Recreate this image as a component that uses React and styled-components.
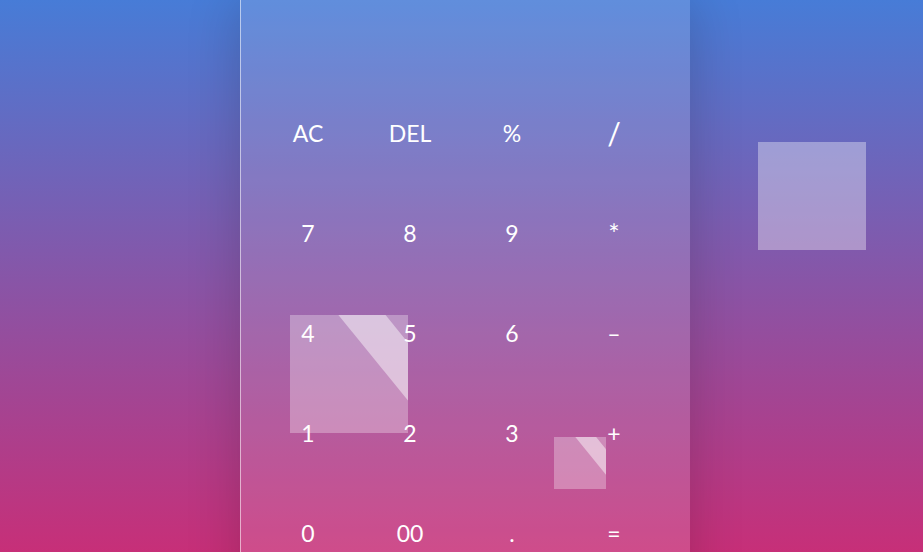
import React from "react";
import styled, { createGlobalStyle } from "styled-components";

const GlobalStyle = createGlobalStyle`
	html, body {
		margin: 0;
		padding: 0;
		height: 552px;
		overflow: hidden;
	}
	body {
		font-family: "Lato", "Open Sans", sans-serif;
	}
`;

const Page = styled.div`
	position: relative;
	height: 552px;
	overflow: hidden;
	padding-left: 240px;
	background: linear-gradient(to bottom, #477cd7, #c72f78);
`;

const Panel = styled.div`
	position: relative;
	width: 450px;
	height: 620px;
	box-sizing: border-box;
	padding-left: 16px;
	background: rgba(255, 255, 255, 0.14);
	border-left: 1px solid rgba(255, 255, 255, 0.55);
	box-shadow: 0 0 50px rgba(0, 0, 0, 0.18);
`;

const Display = styled.div`
	height: 83px;
`;

const Keys = styled.div`
	position: relative;
	z-index: 2;
	display: grid;
	grid-template-columns: repeat(4, 102px);
	grid-auto-rows: 100px;
`;

const Key = styled.button`
	display: flex;
	align-items: center;
	justify-content: center;
	background: transparent;
	border: none;
	padding: 0;
	color: #fff;
	font-family: "Lato", "Open Sans", sans-serif;
	font-size: ${(p) => p.$size || 23}px;
	font-weight: 400;
	cursor: pointer;
`;

const Square = styled.div`
	position: absolute;
	left: ${(p) => p.$x}px;
	top: ${(p) => p.$y}px;
	width: ${(p) => p.$size}px;
	height: ${(p) => p.$size}px;
	background: rgba(255, 255, 255, ${(p) => p.$alpha});
	z-index: 1;

	&::before {
		content: "";
		display: ${(p) => (p.$shine ? "block" : "none")};
		position: absolute;
		inset: 0;
		background: rgba(255, 255, 255, 0.45);
		clip-path: polygon(41% 0, 81% 0, 100% 23.5%, 100% 72.5%);
	}
`;

const keys = [
	"AC", "DEL", "%", "/",
	"7", "8", "9", "*",
	"4", "5", "6", "–",
	"1", "2", "3", "+",
	"0", "00", ".", "=",
];

const sizes = { "/": 30, "*": 27 };

export default function App() {
	return (
		<>
			<GlobalStyle />
			<Page>
				<Panel>
					<Display />
					<Keys>
						{keys.map((k) => (
							<Key key={k} $size={sizes[k]}>
								{k}
							</Key>
						))}
					</Keys>
					<Square $x={49} $y={315} $size={118} $alpha={0.3} $shine />
					<Square $x={313} $y={437} $size={52} $alpha={0.3} $shine />
				</Panel>
				<Square $x={758} $y={142} $size={108} $alpha={0.36} />
			</Page>
		</>
	);
}
